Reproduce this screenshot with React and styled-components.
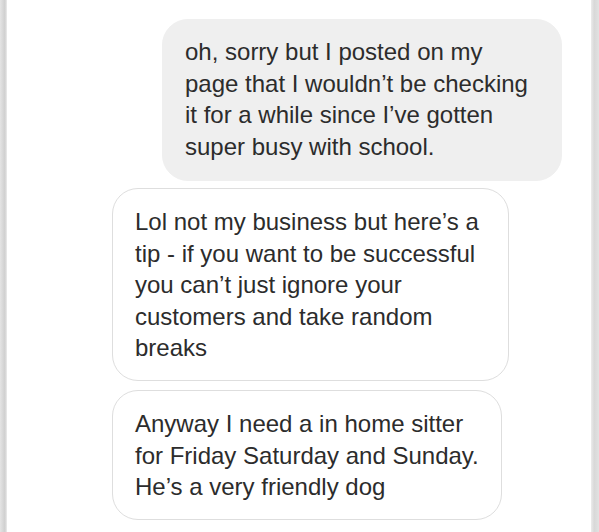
import styled, { createGlobalStyle } from 'styled-components'

const GlobalStyle = createGlobalStyle`
  html, body {
    margin: 0;
    padding: 0;
    background: #fff;
  }
  body {
    font-family: "Liberation Sans", Arial, sans-serif;
  }
`

const Frame = styled.div`
  box-sizing: border-box;
  width: 599px;
  height: 532px;
  display: flex;
  background: #fff;
  overflow: hidden;
`

const Edge = styled.div`
  flex: 0 0 ${(p) => p.w}px;
  background: ${(p) => p.bg};
`

const Thread = styled.div`
  flex: 1;
  display: flex;
  flex-direction: column;
  padding-top: 19px;
`

const Bubble = styled.div`
  box-sizing: border-box;
  width: ${(p) => p.w}px;
  margin-left: ${(p) => p.left}px;
  margin-bottom: ${(p) => p.gap}px;
  padding: ${(p) => p.padY}px 0 0 22px;
  height: ${(p) => p.h}px;
  border-radius: 26px;
  background: ${(p) => (p.mine ? '#efefef' : '#fff')};
  border: 1px solid ${(p) => (p.mine ? '#efefef' : '#dedede')};
  color: #2c2c2c;
  font-size: 24px;
  line-height: 31.5px;
  letter-spacing: 0;
`

const Line = styled.div`
  white-space: nowrap;
`

const messages = [
  {
    mine: true,
    left: 155,
    w: 400,
    h: 162,
    padY: 16,
    gap: 7,
    lines: [
      'oh, sorry but I posted on my',
      'page that I wouldn\u2019t be checking',
      'it for a while since I\u2019ve gotten',
      'super busy with school.',
    ],
  },
  {
    left: 105,
    w: 397,
    h: 193,
    padY: 17,
    gap: 9,
    lines: [
      'Lol not my business but here\u2019s a',
      'tip - if you want to be successful',
      'you can\u2019t just ignore your',
      'customers and take random',
      'breaks',
    ],
  },
  {
    left: 105,
    w: 390,
    h: 130,
    padY: 17,
    gap: 0,
    lines: [
      'Anyway I need a in home sitter',
      'for Friday Saturday and Sunday.',
      'He\u2019s a very friendly dog',
    ],
  },
]

export default function App() {
  return (
    <>
      <GlobalStyle />
      <Frame>
        <Edge w={7} bg="linear-gradient(90deg, #e4e4e4, #cfcfcf 70%, #ececec)" />
        <Thread>
          {messages.map((m, i) => (
            <Bubble key={i} {...m}>
              {m.lines.map((l, j) => (
                <Line key={j}>{l}</Line>
              ))}
            </Bubble>
          ))}
        </Thread>
        <Edge w={8} bg="linear-gradient(90deg, #ececec, #d8d8d8 40%, #e2e2e2)" />
      </Frame>
    </>
  )
}
